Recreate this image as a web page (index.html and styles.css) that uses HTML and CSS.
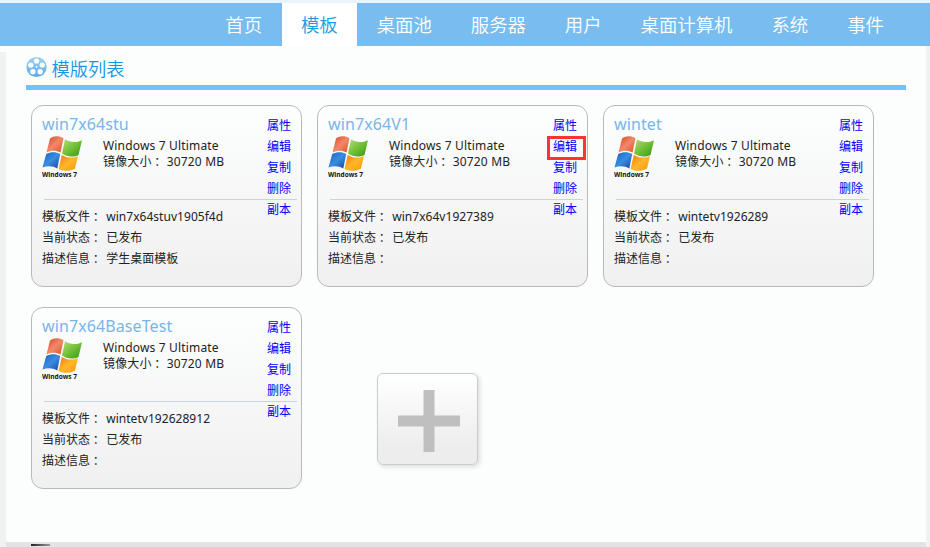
FILE: index.html
```
<!DOCTYPE html>
<html lang="zh-CN">
<head>
<meta charset="utf-8">
<title>模版列表</title>
<link rel="stylesheet" href="styles.css">
</head>
<body>
<svg width="0" height="0" class="defs" aria-hidden="true">
  <defs>
    <linearGradient id="r" x1="0" y1="0" x2="1" y2="1"><stop offset="0" stop-color="#d9421c"/><stop offset=".5" stop-color="#f08a6a"/><stop offset="1" stop-color="#e2501c"/></linearGradient>
    <linearGradient id="g" x1="0" y1="0" x2="1" y2="1"><stop offset="0" stop-color="#b5dc80"/><stop offset=".5" stop-color="#72c035"/><stop offset="1" stop-color="#2f9614"/></linearGradient>
    <linearGradient id="b" x1="0" y1="0" x2="1" y2="1"><stop offset="0" stop-color="#1262c4"/><stop offset=".5" stop-color="#3a8de0"/><stop offset="1" stop-color="#1746a4"/></linearGradient>
    <linearGradient id="y" x1="0" y1="0" x2="1" y2="1"><stop offset="0" stop-color="#f07a0a"/><stop offset=".5" stop-color="#ffb62a"/><stop offset="1" stop-color="#f49a08"/></linearGradient>
    <linearGradient id="reel" x1="0" y1="0" x2="0" y2="1"><stop offset="0" stop-color="#9fd2f4"/><stop offset="1" stop-color="#5aa9e4"/></linearGradient>
    <symbol id="win" viewBox="0 0 44 44">
      <path fill="url(#r)" d="M8 2.500C12 -.5 17 -.2 21.500 2.200L18.500 16.500C14 14 9 14.200 4.500 16.500Z"/>
      <path fill="url(#g)" d="M23 3.300C28 6.500 34 7 40 4.200L36.500 19C31 21.500 25 21 20 17.500Z"/>
      <path fill="url(#b)" d="M4.200 18C9 15.500 14 15.500 18.200 18L15.300 32.500C11 30 6 29.300 .5 31.500Z"/>
      <path fill="url(#y)" d="M19.800 19C25 22 30 22.500 36 20L33 32.500C28 35.500 21 35.500 16.500 33Z"/>
      <text x="0" y="40.800" class="win-label" textLength="35" lengthAdjust="spacingAndGlyphs">Windows 7</text>
    </symbol>
  </defs>
</svg>
<nav class="nav">
  <a>首页</a><a class="active">模板</a><a>桌面池</a><a>服务器</a><a>用户</a><a>桌面计算机</a><a>系统</a><a>事件</a>
</nav>
<main class="page">
  <header class="heading">
    <svg class="reel" viewBox="0 0 22 22"><circle cx="11" cy="11" r="10.600" fill="url(#reel)"/><g fill="#fcfefe"><circle cx="11" cy="4.800" r="2.800"/><circle cx="17" cy="9" r="2.800"/><circle cx="14.800" cy="16" r="2.800"/><circle cx="7.200" cy="16" r="2.800"/><circle cx="5" cy="9" r="2.800"/><circle cx="11" cy="11" r="1"/></g></svg>
    <h1>模版列表</h1>
  </header>
  <section class="cards">
    <article class="card">
      <div class="summary"><h2>win7x64stu</h2><div class="os"><svg class="logo"><use href="#win"/></svg><p>Windows 7 Ultimate<br>镜像大小<i>：</i>30720 MB</p></div></div>
      <div class="links"><a>属性</a><a>编辑</a><a>复制</a><a>删除</a><a>副本</a></div>
      <hr>
      <div class="details"><p>模板文件<i>：</i>win7x64stuv1905f4d</p><p>当前状态<i>：</i>已发布</p><p>描述信息<i>：</i>学生桌面模板</p></div>
    </article>
    <article class="card">
      <div class="summary"><h2>win7x64V1</h2><div class="os"><svg class="logo"><use href="#win"/></svg><p>Windows 7 Ultimate<br>镜像大小<i>：</i>30720 MB</p></div></div>
      <div class="links"><a>属性</a><a class="marked">编辑</a><a>复制</a><a>删除</a><a>副本</a></div>
      <hr>
      <div class="details"><p>模板文件<i>：</i>win7x64v1927389</p><p>当前状态<i>：</i>已发布</p><p>描述信息<i>：</i></p></div>
    </article>
    <article class="card">
      <div class="summary"><h2>wintet</h2><div class="os"><svg class="logo"><use href="#win"/></svg><p>Windows 7 Ultimate<br>镜像大小<i>：</i>30720 MB</p></div></div>
      <div class="links"><a>属性</a><a>编辑</a><a>复制</a><a>删除</a><a>副本</a></div>
      <hr>
      <div class="details"><p>模板文件<i>：</i>wintetv1926289</p><p>当前状态<i>：</i>已发布</p><p>描述信息<i>：</i></p></div>
    </article>
    <article class="card">
      <div class="summary"><h2>win7x64BaseTest</h2><div class="os"><svg class="logo"><use href="#win"/></svg><p>Windows 7 Ultimate<br>镜像大小<i>：</i>30720 MB</p></div></div>
      <div class="links"><a>属性</a><a>编辑</a><a>复制</a><a>删除</a><a>副本</a></div>
      <hr>
      <div class="details"><p>模板文件<i>：</i>wintetv192628912</p><p>当前状态<i>：</i>已发布</p><p>描述信息<i>：</i></p></div>
    </article>
    <button class="add" aria-label="添加"><svg viewBox="0 0 62 62"><path d="M25.500 0h11v25.500H62v11H36.500V62h-11V36.500H0v-11h25.500z" fill="#bfbfbf"/></svg></button>
  </section>
</main>
<footer class="footer"><span></span></footer>
</body>
</html>
```
FILE: styles.css
```
* { box-sizing: border-box; }
body {
  margin: 0;
  height: 547px;
  overflow: hidden;
  display: flex;
  flex-direction: column;
  background: linear-gradient(90deg, #fcfdfd 50%, transparent 50%) 0 0 / 100% 52px no-repeat #f1f1f1;
  font: 12px "Noto Sans", "Noto Sans CJK SC", sans-serif;
  color: #222;
}
h1, h2, p { margin: 0; font-weight: 400; }
.defs { position: absolute; }
.nav {
  height: 46px;
  flex: none;
  border-top: 3px solid #e9f4fc;
  background: #78bcf0;
  display: flex;
  padding-left: 205.800px;
}
.nav a {
  padding: 0 19.460px;
  font: 350 18.400px/42px "Noto Sans CJK SC", sans-serif;
  color: #fff;
}
.nav .active { background: #fff; color: #1a9be3; }
.page {
  flex: none;
  height: 496px;
  margin: 0 4px 0 6px;
  padding: 8px 20px 0;
  background: #fcfefd;
}
.heading {
  display: flex;
  height: 36px;
  border-bottom: 5px solid #68c7f7;
  gap: 4.500px;
}
.reel { width: 21px; height: 22px; margin-top: 2px; flex: none; }
.heading h1 {
  font: 350 18.300px/28px "Noto Sans CJK SC", sans-serif;
  color: #1596e4;
}
.cards {
  display: grid;
  grid-template-columns: repeat(3, 271px);
  gap: 20px 15px;
  padding: 15px 0 0 5px;
}
.card {
  height: 182px;
  border: 1px solid #b9b9b9;
  border-radius: 12px;
  background: linear-gradient(#fdfefe, #f0f0f0);
  display: grid;
  grid-template-columns: 1fr 34px;
  grid-template-rows: 93px 1px 1fr;
}
.summary { padding: 7px 0 0 10px; grid-area: 1 / 1; }
.card h2 { font-size: 16px; line-height: 23px; letter-spacing: .1px; color: #79b5e8; }
.os { display: flex; gap: 17px; }
.logo { width: 44px; height: 44px; flex: none; overflow: visible; }
.win-label { font: bold 7px "Open Sans", sans-serif; fill: #111; }
.os p { line-height: 16px; padding-top: 2px; white-space: nowrap; letter-spacing: .17px; }
i { display: inline-block; width: 16px; padding-left: 2.500px; font-style: normal; letter-spacing: 0; }
.os i { width: 15px; }
.links {
  grid-area: 1 / 2 / 4 / 3;
  display: flex;
  flex-direction: column;
  padding-top: 9px;
  z-index: 1;
}
.links a { line-height: 21px; height: 21px; color: #00f; }
.links .marked {
  outline: 3px solid #f33;
  outline-offset: -3px;
  width: 39px;
  height: 24px;
  margin: 0 0 -3px -6px;
  padding-left: 6px;
}
.card hr { grid-area: 2 / 1 / 3 / 3; margin: 0 4px 0 12px; border: 0; background: #ccd4db; }
.details { grid-area: 3 / 1; padding: 6px 0 0 10px; }
.details p { line-height: 21px; height: 21px; white-space: nowrap; letter-spacing: .04px; }
.add {
  width: 101px;
  height: 92px;
  margin: 66px 0 0 60px;
  padding: 0;
  border: 1px solid #cbcbcb;
  border-radius: 6px;
  background: linear-gradient(#fff, #ededed 80%);
  box-shadow: 2px 2px 4px #ddd;
  display: grid;
  place-items: center;
}
.add svg { width: 62px; height: 62px; margin: 3px 0 0 2px; }
.footer { height: 5px; margin: 0 4px 0 6px; background: #e3e3e3; padding: 2px 0 0 25px; }
.footer span { display: block; width: 19px; height: 2px; background: linear-gradient(90deg, #222, #999); }
```
